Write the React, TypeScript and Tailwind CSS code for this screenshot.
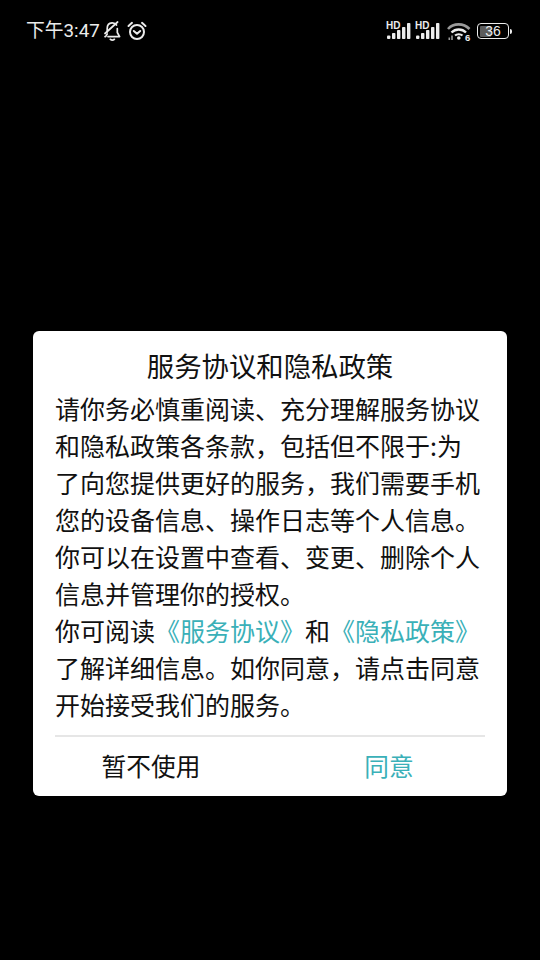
import React from 'react';

const bodyLines = [
  '请你务必慎重阅读、充分理解服务协议',
  '和隐私政策各条款，包括但不限于:为',
  '了向您提供更好的服务，我们需要手机',
  '您的设备信息、操作日志等个人信息。',
  '你可以在设置中查看、变更、删除个人',
  '信息并管理你的授权。',
];

function BellOff() {
  return (
    <svg width="17" height="20" viewBox="0 0 17 20" fill="none" stroke="#ececec" strokeWidth="1.7" strokeLinecap="round" strokeLinejoin="round">
      <path d="M3.2 11V7.5C3.2 4.2 5.2 2 8 1.8C10 1.7 11.5 2.5 12.5 4" />
      <path d="M13.3 7.5V11.5L15.6 15.6H4" />
      <path d="M1 15.6H1.6L3.2 13" />
      <path d="M1 12.5L13.6 1" />
      <path d="M6.3 18.3C7.5 19.2 9.2 19.2 10.4 18.3" />
    </svg>
  );
}

function Alarm() {
  return (
    <svg width="20" height="20" viewBox="0 0 20 20" fill="none" stroke="#ececec" strokeWidth="2" strokeLinecap="round" strokeLinejoin="round">
      <circle cx="10" cy="11" r="7" />
      <path d="M1.5 5L5 1.8" />
      <path d="M18.5 5L15 1.8" />
      <path d="M6.8 10L10 12.8L13.2 10" />
    </svg>
  );
}

function Signal() {
  return (
    <div className="relative w-[25px] h-[18px]">
      <span className="absolute left-0 top-[-1px] text-[10px] leading-[10px] font-bold text-[#ececec] font-['Liberation_Sans',sans-serif]">HD</span>
      <svg className="absolute left-0 top-0" width="25" height="18" viewBox="0 0 25 18" fill="#ececec">
        <rect x="1" y="13.5" width="3.4" height="3.5" rx="1" />
        <rect x="6" y="11" width="3.4" height="6" rx="0.8" />
        <rect x="11" y="8" width="3.4" height="9" rx="0.8" />
        <rect x="16" y="5" width="3.4" height="12" rx="0.8" />
        <rect x="21" y="1" width="3.4" height="16" rx="0.8" />
      </svg>
    </div>
  );
}

function Wifi() {
  return (
    <svg width="24" height="19" viewBox="0 0 24 19" fill="none">
      <path d="M1 7C6.5 0.8 16.5 0.8 22.5 7" stroke="#9a9a9a" strokeWidth="2.6" />
      <path d="M4.5 10.5C8.5 6.4 15 6.4 19 10.5" stroke="#ececec" strokeWidth="2.4" />
      <path d="M8 13.5C10 11.8 13.5 11.8 15.5 13.5" stroke="#ececec" strokeWidth="2.2" />
      <circle cx="11.8" cy="16" r="1.8" fill="#ececec" />
      <rect x="1.5" y="15.5" width="1.6" height="2.5" fill="#9a9a9a" />
      <rect x="4.2" y="13.5" width="1.6" height="4.5" fill="#9a9a9a" />
      <text x="18" y="18.5" fontSize="9.5" fontWeight="700" fill="#ececec" fontFamily="Liberation Sans">6</text>
    </svg>
  );
}

function Battery() {
  return (
    <div className="flex items-center">
      <div className="relative w-[32px] h-[16px] rounded-[4px] border-[1.5px] border-[#ececec] flex items-center justify-center overflow-hidden">
        <div className="absolute left-[1.5px] top-[1.5px] bottom-[1.5px] w-[11px] rounded-[1px] bg-[#5c5c5c]" />
        <span className="relative text-[14px] leading-none text-[#ececec] font-['Liberation_Sans',sans-serif]">36</span>
      </div>
      <div className="ml-[1px] w-[2px] h-[5px] rounded-r-sm bg-[#ececec]" />
    </div>
  );
}

export default function App() {
  return (
    <div className="w-[540px] h-[960px] bg-black overflow-hidden font-['Liberation_Sans','Noto_Sans_CJK_SC',sans-serif]">
      {/* Status bar */}
      <div className="h-[62px] pl-[26px] pr-[28px] flex items-center justify-between">
        <div className="flex items-center text-[#ececec]">
          <span className="text-[18.8px] font-['Roboto','Noto_Sans_CJK_SC',sans-serif]">下午3:47</span>
          <span className="ml-[4px] flex"><BellOff /></span>
          <span className="ml-[6px] flex"><Alarm /></span>
        </div>
        <div className="flex items-center">
          <Signal />
          <span className="ml-[4px] flex"><Signal /></span>
          <span className="ml-[7px] flex"><Wifi /></span>
          <span className="ml-[6px] flex"><Battery /></span>
        </div>
      </div>

      {/* Dialog */}
      <div className="mt-[269px] mx-[33px] h-[465px] bg-white rounded-[6px] px-[22px] text-[#111111] font-['Noto_Sans_CJK_SC',sans-serif]">
        <h1 className="pt-[15px] text-center text-[27.4px] leading-[38px] font-normal">服务协议和隐私政策</h1>
        <div className="mt-[6px] text-[25px] leading-[37px] whitespace-nowrap">
          {bodyLines.map((line) => (
            <div key={line}>{line}</div>
          ))}
          <div>
            你可阅读<span className="text-[#3ab0b8]">《服务协议》</span>和<span className="text-[#3ab0b8]">《隐私政策》</span>
          </div>
          <div>了解详细信息。如你同意，请点击同意</div>
          <div>开始接受我们的服务。</div>
        </div>
        <div className="mt-[12px] border-t-2 border-[#e6e6e6] flex h-[60px] text-[24.7px]">
          <button className="w-[192px] text-center">暂不使用</button>
          <button className="flex-1 pl-[46px] text-center text-[#3ab0b8]">同意</button>
        </div>
      </div>
    </div>
  );
}
